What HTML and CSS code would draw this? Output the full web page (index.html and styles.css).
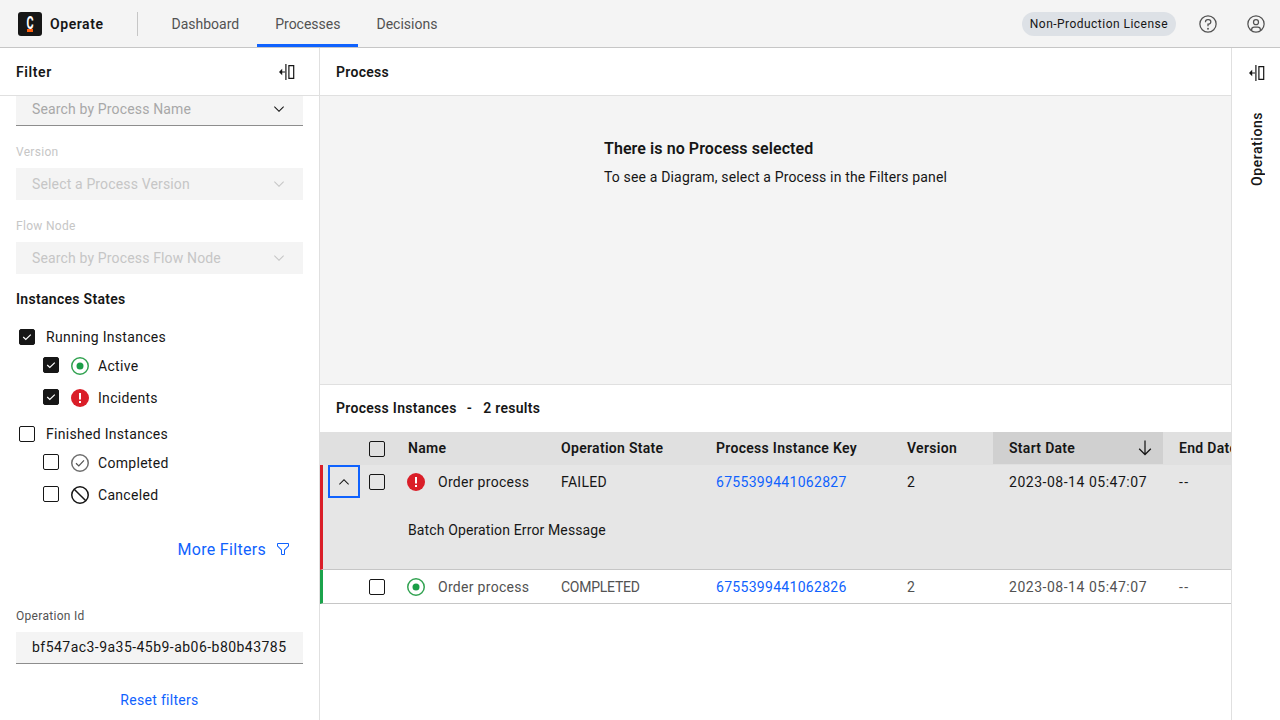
FILE: index.html
```html
<!DOCTYPE html>
<html lang="en">
<head>
    <meta charset="UTF-8">
    <meta name="viewport" content="width=device-width, initial-scale=1.0">
    <title>Operate</title>
    <link rel="stylesheet" href="styles.css">
</head>
<body>
    <header class="topbar">
        <div class="logo">
            <span class="logo-c">C</span>
            <span class="logo-bar"></span>
        </div>
        <span class="app-name">Operate</span>
        <span class="topbar-divider"></span>
        <nav class="tabs">
            <a class="tab">Dashboard</a>
            <a class="tab tab-active">Processes</a>
            <a class="tab">Decisions</a>
        </nav>
        <div class="topbar-right">
            <span class="license">Non-Production License</span>
            <svg class="top-icon" viewBox="0 0 32 32"><path d="M16,2A14,14,0,1,0,30,16,14,14,0,0,0,16,2Zm0,26A12,12,0,1,1,28,16,12,12,0,0,1,16,28Z"/><circle cx="16" cy="23.5" r="1.5"/><path d="M17,8H15.5A4.49,4.49,0,0,0,11,12.5V13h2v-.5A2.5,2.5,0,0,1,15.5,10H17a2.5,2.5,0,0,1,0,5H15v4.5h2V17a4.5,4.5,0,0,0,0-9Z"/></svg>
            <svg class="top-icon" viewBox="0 0 32 32"><path d="M16,8a5,5,0,1,0,5,5A5,5,0,0,0,16,8Zm0,8a3,3,0,1,1,3-3A3.0034,3.0034,0,0,1,16,16Z"/><path d="M16,2A14,14,0,1,0,30,16,14.0158,14.0158,0,0,0,16,2ZM10,26.3765V25a3.0033,3.0033,0,0,1,3-3h6a3.0033,3.0033,0,0,1,3,3v1.3765a11.8989,11.8989,0,0,1-12,0Zm13.9925-1.4507A5.0016,5.0016,0,0,0,19,20H13a5.0016,5.0016,0,0,0-4.9925,4.9258,12,12,0,1,1,15.985,0Z"/></svg>
        </div>
    </header>

    <div class="layout">
        <aside class="filters">
            <div class="panel-head">
                <span class="panel-title">Filter</span>
                <svg class="collapse-icon" viewBox="0 0 16 16"><path d="M0 8l3.2-3.2v2.6H6v1.2H3.2v2.6z"/><path d="M6.3 0h1.2v16H6.3z"/><path fill-rule="evenodd" d="M9.3 1h6v14h-6zM10.5 2.2v11.6h3.6V2.2z"/></svg>
            </div>
            <div class="filters-scroll">
                <div class="select select-first">
                    <span class="select-text">Search by Process Name</span>
                    <svg class="chevron" viewBox="0 0 32 32"><path d="M16 22 6 12 7.4 10.6 16 19.2 24.6 10.6 26 12z"/></svg>
                </div>
                <label class="field-label field-label-off">Version</label>
                <div class="select select-off">
                    <span class="select-text">Select a Process Version</span>
                    <svg class="chevron" viewBox="0 0 32 32"><path d="M16 22 6 12 7.4 10.6 16 19.2 24.6 10.6 26 12z"/></svg>
                </div>
                <label class="field-label field-label-off">Flow Node</label>
                <div class="select select-off">
                    <span class="select-text">Search by Process Flow Node</span>
                    <svg class="chevron" viewBox="0 0 32 32"><path d="M16 22 6 12 7.4 10.6 16 19.2 24.6 10.6 26 12z"/></svg>
                </div>

                <h3 class="states-title">Instances States</h3>

                <div class="state state-parent">
                    <span class="check checked"><svg viewBox="0 0 14 14"><path d="M3.2 7l2.6 2.4 5-4.8"/></svg></span>
                    <span>Running Instances</span>
                </div>
                <div class="state state-child">
                    <span class="check checked"><svg viewBox="0 0 14 14"><path d="M3.2 7l2.6 2.4 5-4.8"/></svg></span>
                    <svg class="state-icon" viewBox="0 0 18 18"><circle class="ok-ring" cx="9" cy="9" r="8.25"/><circle class="ok-dot" cx="9" cy="9" r="3.5"/></svg>
                    <span>Active</span>
                </div>
                <div class="state state-child state-gap">
                    <span class="check checked"><svg viewBox="0 0 14 14"><path d="M3.2 7l2.6 2.4 5-4.8"/></svg></span>
                    <svg class="state-icon" viewBox="0 0 18 18"><circle class="err-bg" cx="9" cy="9" r="9"/><rect class="err-mark" x="8" y="4" width="2" height="6.5"/><rect class="err-mark" x="8" y="12" width="2" height="2"/></svg>
                    <span>Incidents</span>
                </div>
                <div class="state state-parent state-finished">
                    <span class="check"></span>
                    <span>Finished Instances</span>
                </div>
                <div class="state state-child">
                    <span class="check"></span>
                    <svg class="state-icon" viewBox="0 0 18 18"><circle class="done-ring" cx="9" cy="9" r="8.25"/><path class="done-tick" d="M5 9.3l2.8 2.7L13 6.3"/></svg>
                    <span>Completed</span>
                </div>
                <div class="state state-child state-gap">
                    <span class="check"></span>
                    <svg class="state-icon" viewBox="0 0 18 18"><circle class="cancel-ring" cx="9" cy="9" r="8.25"/><path class="cancel-ring" d="M3.2 3.2l11.6 11.6"/></svg>
                    <span>Canceled</span>
                </div>

                <div class="more-filters">
                    <span>More Filters</span>
                    <svg class="funnel" viewBox="0 0 32 32"><path d="M18,28H14a2,2,0,0,1-2-2V18.41L4.59,11A2,2,0,0,1,4,9.59V6A2,2,0,0,1,6,4H26a2,2,0,0,1,2,2V9.59A2,2,0,0,1,27.41,11L20,18.41V26A2,2,0,0,1,18,28ZM6,6V9.59l8,8V26h4V17.59l8-8V6Z"/></svg>
                </div>

                <label class="field-label field-label-id">Operation Id</label>
                <div class="text-input">bf547ac3-9a35-45b9-ab06-b80b43785</div>
                <a class="reset">Reset filters</a>
            </div>
        </aside>

        <main class="main">
            <div class="panel-head">
                <span class="panel-title">Process</span>
            </div>
            <section class="diagram">
                <div class="empty">
                    <h2 class="empty-title">There is no Process selected</h2>
                    <p class="empty-text">To see a Diagram, select a Process in the Filters panel</p>
                </div>
            </section>
            <section class="instances">
                <div class="instances-head">
                    <span>Process Instances</span>
                    <span class="instances-dash">-</span>
                    <span>2 results</span>
                </div>
                <div class="row row-head">
                    <span></span>
                    <span class="cell-check"><span class="check"></span></span>
                    <span class="cell">Name</span>
                    <span class="cell">Operation State</span>
                    <span class="cell">Process Instance Key</span>
                    <span class="cell">Version</span>
                    <span class="cell cell-sorted">Start Date
                        <svg class="sort-icon" viewBox="0 0 32 32"><path d="M24.59 16.59 17 24.17 17 4 15 4 15 24.17 7.41 16.59 6 18 16 28 26 18 24.59 16.59z"/></svg>
                    </span>
                    <span class="cell">End Date</span>
                </div>
                <div class="group group-failed">
                    <div class="row">
                        <span class="cell-expand">
                            <button class="expand"><svg viewBox="0 0 32 32"><path d="M16 10 26 20 24.6 21.4 16 12.8 7.4 21.4 6 20z"/></svg></button>
                        </span>
                        <span class="cell-check"><span class="check"></span></span>
                        <span class="cell cell-name">
                            <svg class="state-icon" viewBox="0 0 18 18"><circle class="err-bg" cx="9" cy="9" r="9"/><rect class="err-mark" x="8" y="4" width="2" height="6.5"/><rect class="err-mark" x="8" y="12" width="2" height="2"/></svg>
                            Order process
                        </span>
                        <span class="cell">FAILED</span>
                        <span class="cell"><a class="key">6755399441062827</a></span>
                        <span class="cell">2</span>
                        <span class="cell cell-date">2023-08-14 05:47:07</span>
                        <span class="cell cell-dash">--</span>
                    </div>
                    <div class="row-message">Batch Operation Error Message</div>
                </div>
                <div class="group group-ok">
                    <div class="row row-muted">
                        <span></span>
                        <span class="cell-check"><span class="check"></span></span>
                        <span class="cell cell-name">
                            <svg class="state-icon" viewBox="0 0 18 18"><circle class="ok-ring" cx="9" cy="9" r="8.25"/><circle class="ok-dot" cx="9" cy="9" r="3.5"/></svg>
                            Order process
                        </span>
                        <span class="cell cell-completed">COMPLETED</span>
                        <span class="cell"><a class="key">6755399441062826</a></span>
                        <span class="cell">2</span>
                        <span class="cell cell-date">2023-08-14 05:47:07</span>
                        <span class="cell cell-dash">--</span>
                    </div>
                </div>
            </section>
        </main>

        <aside class="operations">
            <svg class="collapse-icon" viewBox="0 0 16 16"><path d="M0 8l3.2-3.2v2.6H6v1.2H3.2v2.6z"/><path d="M6.3 0h1.2v16H6.3z"/><path fill-rule="evenodd" d="M9.3 1h6v14h-6zM10.5 2.2v11.6h3.6V2.2z"/></svg>
            <span class="operations-label">Operations</span>
        </aside>
    </div>
</body>
</html>
```

FILE: styles.css
```css
* {
    box-sizing: border-box;
}
html, body {
    margin: 0;
    height: 100%;
    overflow: hidden;
}
body {
    font-family: "Roboto", "Liberation Sans", sans-serif;
    font-size: 14px;
    letter-spacing: 0.3px;
    color: #161616;
    background: #fff;
}

/* top bar */
.topbar {
    display: flex;
    align-items: center;
    height: 48px;
    padding-left: 18px;
    background: #f4f4f4;
    border-bottom: 1px solid #c6c6c6;
}
.logo {
    display: flex;
    flex-direction: column;
    align-items: center;
    width: 24px;
    height: 24px;
    border-radius: 3px;
    background: #161616;
}
.logo-c {
    height: 13px;
    margin-top: 4px;
    font-size: 18px;
    line-height: 13px;
    font-weight: 700;
    color: #fff;
    transform: scaleX(0.6);
}
.logo-bar {
    width: 6px;
    height: 3px;
    background: #fc5d0d;
}
.app-name {
    margin-left: 8px;
    font-weight: 600;
    letter-spacing: 0.55px;
}
.topbar-divider {
    width: 1px;
    height: 24px;
    margin-left: 34px;
    background: #c6c6c6;
}
.tabs {
    display: flex;
    align-self: stretch;
    margin-left: 15px;
}
.tab {
    display: flex;
    align-items: center;
    padding: 0 18px;
    height: 47px;
    color: #525252;
    letter-spacing: 0;
}
.tab-active {
    border-bottom: 3px solid #0f62fe;
    padding-top: 3px;
}
.topbar-right {
    display: flex;
    align-items: center;
    margin-left: auto;
    padding-right: 14px;
}
.license {
    height: 24px;
    padding: 0 8px;
    border-radius: 12px;
    font-size: 12px;
    line-height: 24px;
    letter-spacing: 0.47px;
    background: #dde1e6;
}
.top-icon {
    width: 20px;
    height: 20px;
    margin-left: 22px;
    fill: #525252;
}
.top-icon + .top-icon {
    margin-left: 28px;
}

/* page layout */
.layout {
    display: flex;
    height: 672px;
}
.filters {
    display: flex;
    flex-direction: column;
    flex: none;
    width: 320px;
    border-right: 1px solid #e0e0e0;
}
.panel-head {
    display: flex;
    align-items: center;
    justify-content: space-between;
    flex: none;
    height: 48px;
    padding: 0 24px 0 16px;
    border-bottom: 1px solid #e0e0e0;
}
.panel-title {
    font-weight: 600;
}
.filters .panel-title {
    letter-spacing: 0.6px;
}
.collapse-icon {
    flex: none;
    width: 16px;
    height: 16px;
    fill: #161616;
}
.filters-scroll {
    flex: 1;
    padding: 0 16px;
    overflow: hidden;
}

/* selects and inputs */
.select {
    display: flex;
    align-items: center;
    justify-content: space-between;
    height: 32px;
    padding: 0 16px;
    letter-spacing: 0.15px;
    background: #f4f4f4;
}
.select-first {
    height: 33px;
    margin-top: -3px;
    border-bottom: 1px solid #8d8d8d;
    color: #a8a8a8;
}
.select-off {
    color: #c6c6c6;
}
.chevron {
    width: 16px;
    height: 16px;
    fill: #161616;
}
.select-off .chevron {
    fill: #c6c6c6;
}
.field-label {
    display: block;
    height: 16px;
    margin-top: 18px;
    margin-bottom: 8px;
    font-size: 12px;
    line-height: 16px;
    color: #525252;
}
.field-label-off {
    color: #c6c6c6;
}
.states-title {
    margin: 16px 0 0;
    height: 18px;
    font-size: 14px;
    line-height: 18px;
    font-weight: 600;
}

/* instance state checkboxes */
.state {
    display: flex;
    align-items: center;
    height: 18px;
}
.state-parent {
    padding-left: 3px;
    margin-top: 20px;
}
.state-finished {
    margin-top: 18px;
}
.state-child {
    padding-left: 27px;
    margin-top: 11px;
}
.state-child .check {
    align-self: flex-start;
}
.state-gap {
    margin-top: 14px;
}
.state-parent .check {
    margin-right: 11px;
}
.check {
    display: inline-block;
    flex: none;
    width: 16px;
    height: 16px;
    border: 1px solid #161616;
    border-radius: 2px;
}
.check svg {
    display: block;
    width: 14px;
    height: 14px;
    fill: none;
    stroke: #fff;
    stroke-width: 1.2;
}
.checked {
    background: #161616;
}
.state-icon {
    flex: none;
    width: 18px;
    height: 18px;
}
.state-child .state-icon {
    margin: 0 9px 0 12px;
}
.ok-ring {
    fill: none;
    stroke: #33a352;
    stroke-width: 1.5;
}
.ok-dot {
    fill: #1b9e47;
}
.err-bg {
    fill: #da1e28;
}
.err-mark {
    fill: #fff;
}
.done-ring {
    fill: none;
    stroke: #6f6f6f;
    stroke-width: 1.5;
}
.done-tick {
    fill: none;
    stroke: #525252;
    stroke-width: 1.2;
}
.cancel-ring {
    fill: none;
    stroke: #161616;
    stroke-width: 1.5;
}

.more-filters {
    display: flex;
    align-items: center;
    justify-content: flex-end;
    height: 24px;
    margin-top: 33px;
    padding-right: 13px;
    font-size: 16px;
    color: #0f62fe;
}
.funnel {
    width: 16px;
    height: 16px;
    margin-left: 9px;
    margin-right: -1px;
    fill: #0f62fe;
}
.field-label-id {
    margin-top: 47px;
}
.text-input {
    height: 32px;
    padding: 0 16px;
    line-height: 31px;
    letter-spacing: 0.46px;
    white-space: nowrap;
    overflow: hidden;
    background: #f4f4f4;
    border-bottom: 1px solid #8d8d8d;
}
.reset {
    display: block;
    margin-top: 27px;
    text-align: center;
    line-height: 18px;
    color: #0f62fe;
}

/* main column */
.main {
    display: flex;
    flex-direction: column;
    flex: 1;
    min-width: 0;
    overflow: hidden;
}
.diagram {
    flex: none;
    height: 288px;
    padding: 43px 0 0 284px;
    background: #f4f4f4;
}
.empty-title {
    margin: 0;
    font-size: 16px;
    line-height: 20px;
    font-weight: 600;
    letter-spacing: 0.08px;
}
.empty-text {
    margin: 8px 0 0;
    line-height: 20px;
    letter-spacing: 0.16px;
}
.instances {
    flex: 1;
    border-top: 1px solid #e0e0e0;
}
.instances-head {
    display: flex;
    align-items: center;
    height: 47px;
    padding: 0 0 2px 16px;
    font-weight: 600;
}
.instances-dash {
    margin: 0 11px 0 10px;
}

/* instances table */
.row {
    display: grid;
    grid-template-columns: 37px 32px 153px 155px 191px 102px 170px 120px;
    align-items: center;
    height: 33px;
}
.row-head {
    grid-template-columns: 40px 32px 153px 155px 191px 102px 170px 120px;
    background: #e0e0e0;
    font-weight: 600;
}
.row-head .cell {
    padding-bottom: 2px;
}
.row-head .cell-sorted {
    margin-bottom: 1px;
    padding-bottom: 1px;
}
.cell {
    padding-left: 16px;
    white-space: nowrap;
}
.cell-check {
    display: flex;
    padding-left: 9px;
}
.cell-sorted {
    display: flex;
    align-items: center;
    justify-content: space-between;
    align-self: stretch;
    padding-right: 8px;
    background: #d0d0d0;
}
.sort-icon {
    width: 20px;
    height: 20px;
    fill: #161616;
}
.group {
    border-left: 3px solid;
    border-bottom: 1px solid #c6c6c6;
}
.group-failed {
    height: 105px;
    border-left-color: #da1e28;
    background: #e6e6e6;
}
.group-ok {
    height: 34px;
    border-left-color: #1ba34b;
}
.cell-expand {
    display: flex;
    padding-left: 5px;
}
.expand {
    display: flex;
    align-items: center;
    justify-content: center;
    width: 32px;
    height: 33px;
    padding: 0;
    background: none;
    border: 2px solid #0f62fe;
}
.expand svg {
    width: 16px;
    height: 16px;
    fill: #161616;
}
.cell-name {
    display: flex;
    align-items: center;
    gap: 13px;
    padding-left: 15px;
}
.cell-date {
    letter-spacing: 0.52px;
}
.cell-dash {
    letter-spacing: 1.5px;
}
.cell-completed {
    letter-spacing: -0.25px;
}
.key {
    color: #0f62fe;
}
.row-muted {
    color: #525252;
}
.row-message {
    padding: 23px 0 0 85px;
    line-height: 18px;
    letter-spacing: 0.13px;
}

/* operations rail */
.operations {
    display: flex;
    flex-direction: column;
    align-items: center;
    flex: none;
    width: 49px;
    padding: 17px 0 0 2px;
    border-left: 1px solid #e0e0e0;
}
.operations-label {
    margin-top: 31px;
    writing-mode: vertical-rl;
    transform: rotate(180deg);
    font-weight: 500;
    letter-spacing: 0.55px;
}
```
